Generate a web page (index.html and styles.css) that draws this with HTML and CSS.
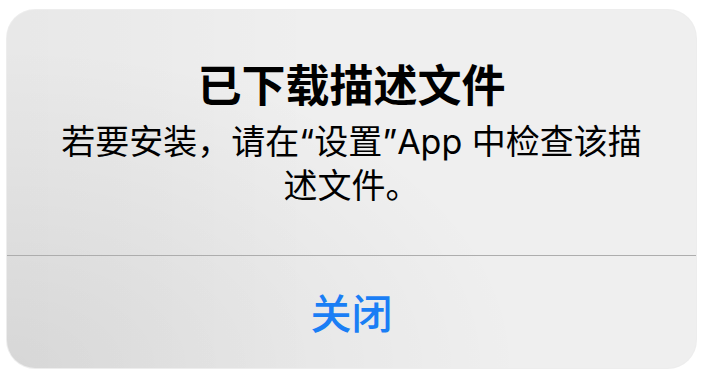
FILE: index.html
```html
<!DOCTYPE html>
<html lang="zh-CN">
<head>
<meta charset="utf-8">
<title>已下载描述文件</title>
<link rel="stylesheet" href="styles.css">
</head>
<body>
<div class="alert">
  <div class="alert-content">
    <h1 class="alert-title">已下载描述文件</h1>
    <p class="alert-message">若要安装，请在“设置”App 中检查该描述文件。</p>
  </div>
  <button class="alert-button" type="button">关闭</button>
</div>
</body>
</html>
```
FILE: styles.css
```css
html, body {
  margin: 0;
  padding: 0;
  background: #ffffff;
}

body {
  width: 706px;
  height: 383px;
  overflow: hidden;
}

.alert {
  box-sizing: border-box;
  margin: 10px 0 0 7px;
  width: 689px;
  height: 358px;
  border-radius: 28px;
  background-color: #efefef;
  background-image:
    radial-gradient(ellipse 75% 90% at 0% 100%, rgba(0, 0, 0, 0.075), rgba(0, 0, 0, 0) 100%),
    linear-gradient(to right, rgba(0, 0, 0, 0.03), rgba(0, 0, 0, 0) 45%);
  box-shadow: 0 0 0 1px rgba(0, 0, 0, 0.07);
  display: flex;
  flex-direction: column;
  overflow: hidden;
}

.alert-content {
  padding: 47px 50px 47px;
  border-bottom: 1px solid #adadad;
  display: flex;
  flex-direction: column;
  align-items: center;
  gap: 10px;
}

.alert-title {
  margin: 0;
  font-family: "Noto Sans CJK SC", sans-serif;
  font-size: 44px;
  font-weight: 700;
  line-height: 53px;
  color: #000000;
  text-align: center;
}

.alert-message {
  margin: 0;
  font-family: Inter, "Noto Sans CJK SC", sans-serif;
  font-size: 34px;
  font-weight: 400;
  line-height: 44px;
  color: #000000;
  text-align: center;
}

.alert-button {
  flex: 1;
  border: 0;
  background: transparent;
  padding: 0 0 3px;
  margin: 0;
  font-family: "Noto Sans CJK SC", sans-serif;
  font-size: 41px;
  font-weight: 500;
  color: #1a7ef5;
  display: flex;
  align-items: center;
  justify-content: center;
}
```
